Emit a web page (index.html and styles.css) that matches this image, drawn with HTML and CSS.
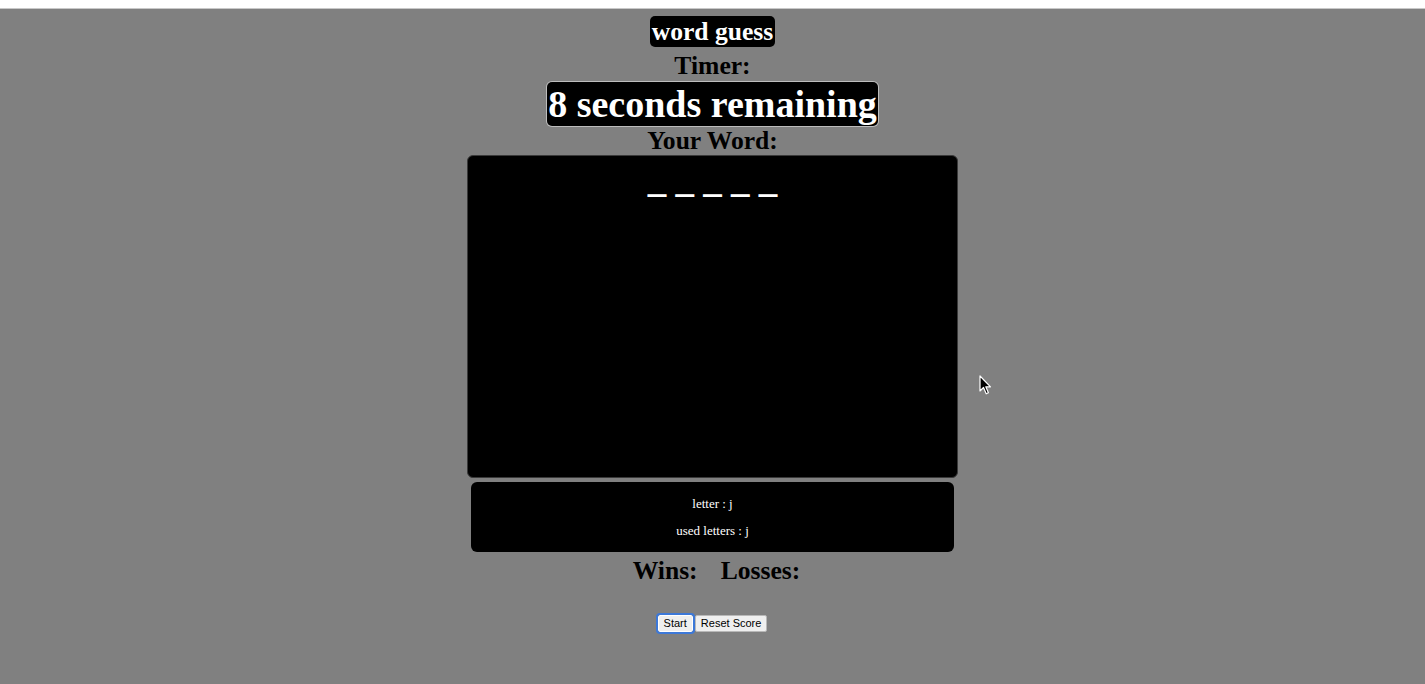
FILE: index.html
```html
<!DOCTYPE html>
<html>
<head>
<meta charset="utf-8">
<title>word guess</title>
<link rel="stylesheet" href="styles.css">
</head>
<body>
<div class="page">
  <div class="title">word guess</div>
  <div class="heading timer-label">Timer:</div>
  <div class="timer">8 seconds remaining</div>
  <div class="heading word-label">Your Word:</div>
  <div class="word-box">
    <div class="blanks">_ _ _ _ _</div>
  </div>
  <div class="info-box">
    <p class="info-line">letter : j</p>
    <p class="info-line">used letters : j</p>
  </div>
  <div class="heading score">
    <span class="score-item">Wins:</span>
    <span class="score-item">Losses:</span>
  </div>
  <div class="buttons">
    <button class="btn btn-start">Start</button>
    <button class="btn">Reset Score</button>
  </div>
  <svg class="cursor" width="14" height="22" viewBox="0 0 14 22">
    <path d="M1 1 L1 16 L4.5 12.5 L7.2 18.8 L9.4 17.8 L6.8 11.8 L11.5 11.8 Z" fill="#000" stroke="#fff" stroke-width="1.2" stroke-linejoin="round"/>
  </svg>
</div>
</body>
</html>
```

FILE: styles.css
```css
html, body {
  margin: 0;
  padding: 0;
}
body {
  background: #ffffff;
  padding-top: 8px;
  font-family: "Liberation Serif", "Times New Roman", serif;
}
.page {
  position: relative;
  background: #808080;
  min-height: 676px;
  box-sizing: border-box;
  padding-top: 7px;
  display: flex;
  flex-direction: column;
  align-items: center;
  border-top: 1px solid #c8c8c8;
}
.title {
  background: #000;
  color: #fff;
  font-weight: bold;
  font-size: 25.6px;
  line-height: 31px;
  padding: 0 2px;
  border-radius: 5px;
}
.heading {
  font-weight: bold;
  font-size: 25.6px;
  color: #000;
}
.timer-label {
  line-height: 30px;
  margin-top: 4px;
}
.timer {
  margin-top: 1px;
  background: #000;
  color: #fff;
  font-weight: bold;
  font-size: 38px;
  line-height: 44px;
  padding: 0 1px;
  border-radius: 5px;
  box-shadow: 0 0 0 1px #bdbdbd;
}
.word-label {
  line-height: 29px;
}
.word-box {
  width: 491px;
  height: 323px;
  box-sizing: border-box;
  background: #000;
  border: 1px solid #3a3a3a;
  border-radius: 6px;
  padding-top: 2px;
  display: flex;
  justify-content: center;
}
.blanks {
  color: #fff;
  font-weight: bold;
  font-size: 37px;
  line-height: 44px;
}
.info-box {
  margin-top: 4px;
  width: 483px;
  box-sizing: border-box;
  background: #000;
  border-radius: 6px;
  padding: 14px 0;
  display: flex;
  flex-direction: column;
  align-items: center;
  gap: 12px;
}
.info-line {
  margin: 0;
  color: #fff;
  font-size: 13px;
  line-height: 15px;
}
.score {
  margin-top: 4px;
  margin-left: 8px;
  line-height: 30px;
  display: flex;
  gap: 23px;
}
.buttons {
  margin-top: 29px;
  display: flex;
  gap: 2px;
}
.btn {
  font-family: "Liberation Sans", Arial, sans-serif;
  font-size: 11px;
  line-height: 13px;
  padding: 1px 5px;
  background: #efefef;
  color: #000;
  border: 1px solid #b8b8b8;
  border-radius: 2px;
  margin: 0;
}
.btn-start {
  outline: 2px solid #3c78d8;
  outline-offset: 0;
  border-color: #fff;
}
.cursor {
  position: absolute;
  left: 979px;
  top: 366px;
}
```
